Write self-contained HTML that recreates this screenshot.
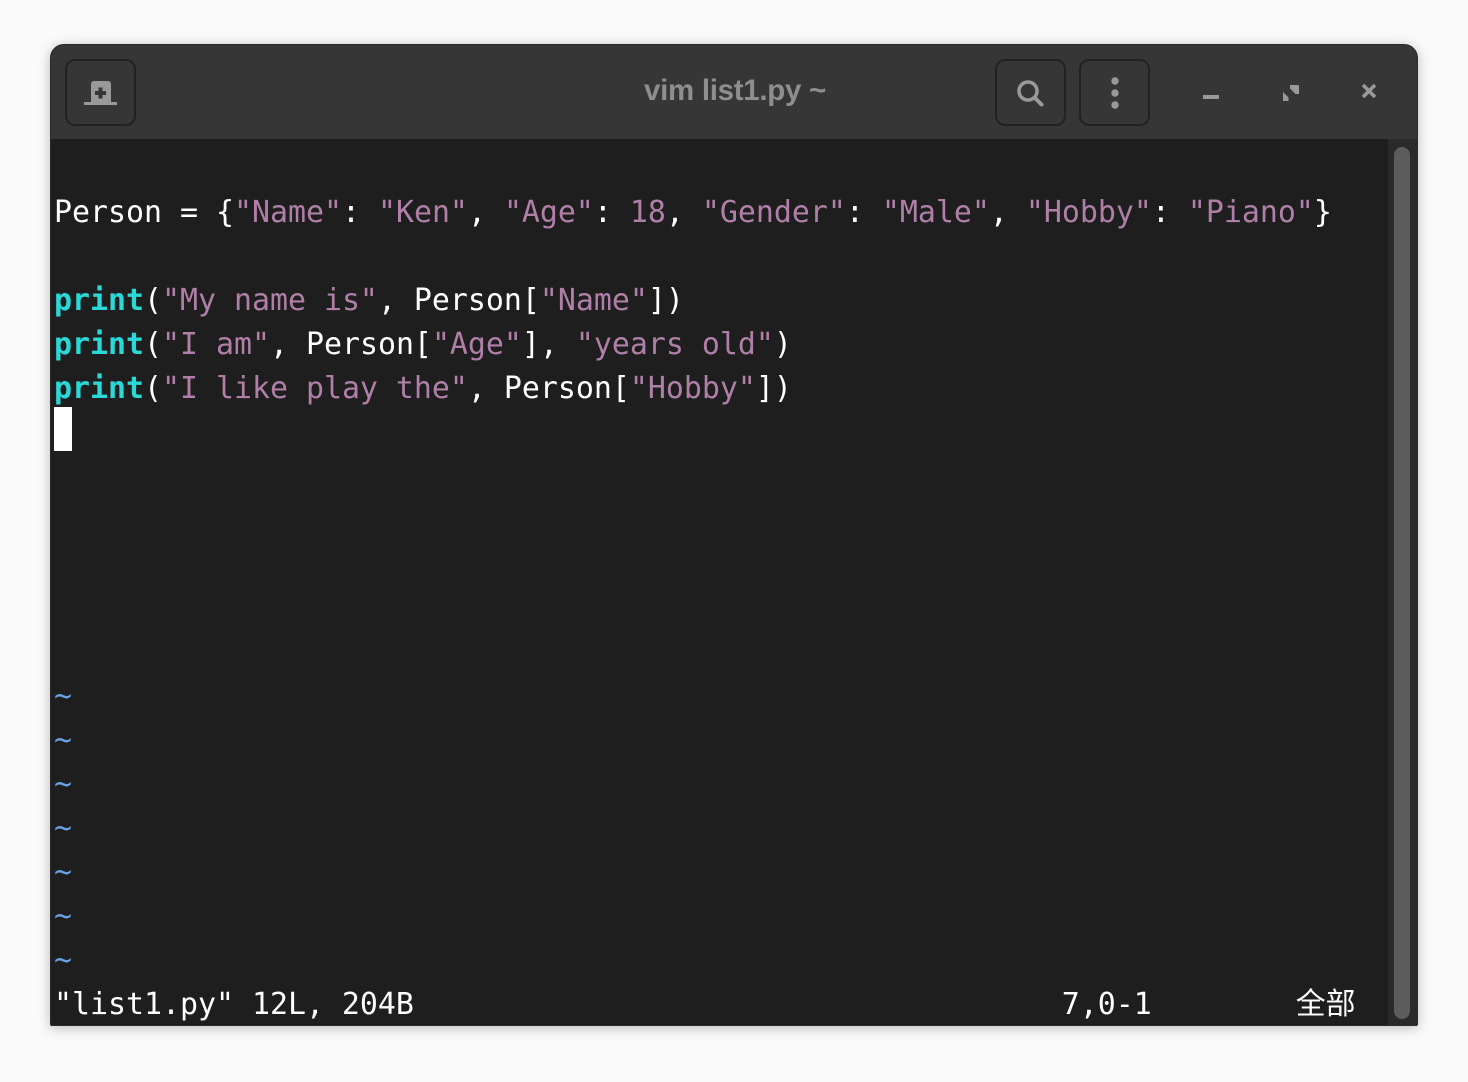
<!DOCTYPE html>
<html><head><meta charset="utf-8"><style>
*{margin:0;padding:0;box-sizing:border-box}
body{width:1468px;height:1082px;background:#fafafa;position:relative;overflow:hidden}
.win{position:absolute;left:50px;top:44px;width:1368px;height:982px;border-radius:14px 14px 2px 2px;background:#1e1e1e;overflow:hidden;box-shadow:0 2px 12px rgba(0,0,0,.25);border:1px solid #2a2a2a}
.hdr{position:absolute;left:0;top:0;width:100%;height:94px;background:#363636}
.btn{position:absolute;top:14px;width:71px;height:67px;border:2px solid #222;border-radius:10px}
.title{position:absolute;left:0;right:0;top:29px;text-align:center;font:bold 29.5px "Liberation Sans","DejaVu Sans",sans-serif;color:#8e8e8e;letter-spacing:-0.3px;padding-left:2px}
.term{position:absolute;left:3px;top:102px;font-family:"DejaVu Sans Mono","Noto Sans CJK SC",monospace;font-size:29.9px;line-height:44px;color:#fff;white-space:pre}
.s{color:#b07fa8}.k{color:#2ad8d8;font-weight:bold}.t{color:#6a9fe0}
.cur{display:inline-block;width:18px;height:44px;background:#fff;vertical-align:top;position:relative;top:-4px}
.sb{position:absolute;left:1337px;top:94px;width:31px;height:888px;background:#2a2a2a}
.th{position:absolute;left:6px;top:8px;width:16px;height:872px;border-radius:8px;background:#5c5c5c}
</style></head><body>
<div class="win">
<div class="hdr">
<div class="btn" style="left:14px"><svg width="71" height="67" viewBox="0 0 71 67" style="position:absolute;left:-2px;top:-2px"><path d="M26 43V25a3 3 0 0 1 3-3h14a3 3 0 0 1 3 3v18h6v3H19v-3z" fill="#999"/><path d="M33.5 28.5h4v3.5h3.5v4h-3.5v3.5h-4V36H30v-4h3.5z" fill="#363636"/></svg></div>
<div class="title">vim list1.py ~</div>
<div class="btn" style="left:944px"><svg width="71" height="67" viewBox="0 0 71 67" style="position:absolute;left:-2px;top:-2px"><circle cx="33" cy="32" r="9" fill="none" stroke="#999" stroke-width="3.5"/><path d="M39.5 38.5l7 7" stroke="#999" stroke-width="4" stroke-linecap="round"/></svg></div>
<div class="btn" style="left:1028px"><svg width="71" height="67" viewBox="0 0 71 67" style="position:absolute;left:-2px;top:-2px"><circle cx="36" cy="22" r="3.7" fill="#999"/><circle cx="36" cy="34" r="3.7" fill="#999"/><circle cx="36" cy="46" r="3.7" fill="#999"/></svg></div>
<svg width="300" height="94" viewBox="0 0 300 94" style="position:absolute;left:1100px;top:0"><rect x="52" y="50" width="16" height="4" fill="#999"/><path d="M139 40h9v9l-3.5 0l-5.5-5.5z M132 47l5.5 5.5v3.5h-5.5z" fill="#999"/><path d="M212 40l12 12M224 40l-12 12" stroke="#999" stroke-width="3.5"/></svg>
</div>
<div class="term">
Person = {<span class="s">"Name"</span>: <span class="s">"Ken"</span>, <span class="s">"Age"</span>: <span class="s">18</span>, <span class="s">"Gender"</span>: <span class="s">"Male"</span>, <span class="s">"Hobby"</span>: <span class="s">"Piano"</span>}

<span class="k">print</span>(<span class="s">"My name is"</span>, Person[<span class="s">"Name"</span>])
<span class="k">print</span>(<span class="s">"I am"</span>, Person[<span class="s">"Age"</span>], <span class="s">"years old"</span>)
<span class="k">print</span>(<span class="s">"I like play the"</span>, Person[<span class="s">"Hobby"</span>])
<span class="cur"></span>





<span class="t">~</span>
<span class="t">~</span>
<span class="t">~</span>
<span class="t">~</span>
<span class="t">~</span>
<span class="t">~</span>
<span class="t">~</span>
"list1.py" 12L, 204B                                    7,0-1        全部</div>
<div class="sb"><div class="th"></div></div>
</div>
</body></html>
